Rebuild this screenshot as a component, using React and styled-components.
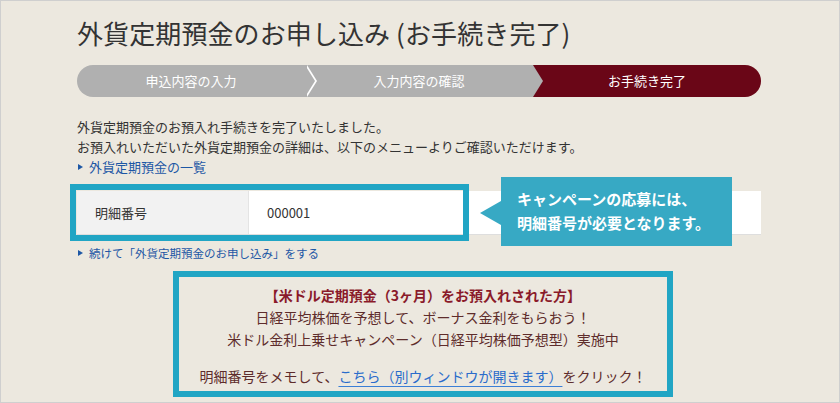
import React from "react";
import styled, { createGlobalStyle } from "styled-components";

const Global = createGlobalStyle`
  html, body { margin: 0; padding: 0; background: #ece8df; }
  body { font-family: "Noto Sans CJK JP", "Noto Sans", sans-serif; }
`;

const Page = styled.div`
  box-sizing: border-box;
  width: 840px;
  height: 403px;
  border: 1px solid #cfcfcf;
  background: #ece8df;
  padding: 15px 78px 0 76px;
  color: #333;
  overflow: hidden;
`;

const Title = styled.h1`
  margin: 0;
  font-size: 26px;
  font-weight: 400;
  line-height: 34px;
  color: #333;
  letter-spacing: 0.1px;
`;

const StepBar = styled.ol`
  display: flex;
  list-style: none;
  margin: 15px 0 0;
  padding: 0;
  height: 32px;
  border-radius: 16px;
  overflow: hidden;
`;

const Step = styled.li`
  position: relative;
  flex: 1;
  background: ${(p) => (p.$active ? "#6a0617" : "#b0b0b0")};
  color: #fff;
  font-size: 13px;
  line-height: 32px;
  text-align: center;

  ${(p) =>
    p.$arrow &&
    `
    &::after {
      content: "";
      position: absolute;
      top: 0;
      right: -10px;
      width: 0;
      height: 0;
      border-left: 10px solid ${p.$active ? "#6a0617" : "#b0b0b0"};
      border-top: 16px solid transparent;
      border-bottom: 16px solid transparent;
      z-index: 3;
    }
  `}

  ${(p) =>
    p.$divider &&
    `
    &::before {
      content: "";
      position: absolute;
      top: 0;
      right: -12px;
      width: 0;
      height: 0;
      border-left: 10px solid #fff;
      border-top: 16px solid transparent;
      border-bottom: 16px solid transparent;
      z-index: 2;
    }
  `}
`;

const Message = styled.div`
  margin-top: 20px;
  font-size: 13px;
  line-height: 20px;
  color: #333;
`;

const Line = styled.p`
  margin: 0;
`;

const ArrowLink = styled.a`
  display: flex;
  align-items: center;
  color: #1d57a5;
  font-size: ${(p) => p.$size || 13}px;
  line-height: 20px;
  text-decoration: none;
  cursor: pointer;

  &::before {
    content: "";
    width: 0;
    height: 0;
    margin-left: 1px;
    border-left: 5px solid #1d57a5;
    border-top: 3.5px solid transparent;
    border-bottom: 3.5px solid transparent;
    margin-right: 6px;
  }
`;

const InfoArea = styled.div`
  position: relative;
  margin-top: 14px;
`;

const InfoRow = styled.div`
  display: flex;
  height: 43px;
  background: #fff;
  border-bottom: 1px solid #dedede;
  font-size: 13px;
`;

const LabelCell = styled.div`
  display: flex;
  align-items: center;
  box-sizing: border-box;
  width: 172px;
  padding-left: 18px;
  background: #f2f2f2;
  border-right: 1px solid #e4e4e4;
  color: #333;
`;

const ValueCell = styled.div`
  display: flex;
  align-items: center;
  padding-left: 18px;
  color: #333;
`;

const Highlight = styled.div`
  position: absolute;
  left: -7px;
  top: -7px;
  box-sizing: border-box;
  width: 399px;
  height: 57px;
  border: 6px solid #21a5c4;
  pointer-events: none;
`;

const Callout = styled.div`
  position: absolute;
  left: 424px;
  top: -14px;
  box-sizing: border-box;
  width: 231px;
  height: 69px;
  padding: 10px 0 0 16px;
  background: #37a9c4;
  color: #fff;
  font-size: 15px;
  font-weight: 700;
  line-height: 24px;
  white-space: nowrap;

  &::before {
    content: "";
    position: absolute;
    left: -21px;
    top: 24px;
    width: 0;
    height: 0;
    border-right: 21px solid #37a9c4;
    border-top: 12px solid transparent;
    border-bottom: 12px solid transparent;
  }
`;

const ContinueWrap = styled.div`
  margin-top: 8px;
`;

const CampaignBox = styled.div`
  box-sizing: border-box;
  width: 500px;
  margin: 8px 0 0 96px;
  padding: 7px 0 4px;
  border: 6px solid #21a5c4;
  text-align: center;
  font-size: 14px;
  line-height: 22px;
  color: #5e2c2b;
`;

const CampaignHead = styled.p`
  margin: 0;
  font-weight: 700;
  color: #8a1a2a;
`;

const CampaignLine = styled.p`
  margin: ${(p) => (p.$gap ? "15px 0 0" : "0")};
`;

const InlineLink = styled.a`
  color: #2a6ccb;
  text-decoration: underline;
  text-decoration-color: #3b7fd6;
  text-underline-offset: 4px;
  cursor: pointer;
`;

const steps = ["申込内容の入力", "入力内容の確認", "お手続き完了"];

export default function App() {
  return (
    <>
      <Global />
      <Page>
        <Title>外貨定期預金のお申し込み (お手続き完了)</Title>
        <StepBar>
          {steps.map((s, i) => (
            <Step
              key={s}
              $active={i === steps.length - 1}
              $arrow={i < steps.length - 1}
              $divider={i === 0}
            >
              {s}
            </Step>
          ))}
        </StepBar>
        <Message>
          <Line>外貨定期預金のお預入れ手続きを完了いたしました。</Line>
          <Line>お預入れいただいた外貨定期預金の詳細は、以下のメニューよりご確認いただけます。</Line>
          <ArrowLink>外貨定期預金の一覧</ArrowLink>
        </Message>
        <InfoArea>
          <InfoRow>
            <LabelCell>明細番号</LabelCell>
            <ValueCell>000001</ValueCell>
          </InfoRow>
          <Highlight />
          <Callout>
            キャンペーンの応募には、
            <br />
            明細番号が必要となります。
          </Callout>
        </InfoArea>
        <ContinueWrap>
          <ArrowLink $size={11.5}>続けて「外貨定期預金のお申し込み」をする</ArrowLink>
        </ContinueWrap>
        <CampaignBox>
          <CampaignHead>【米ドル定期預金（3ヶ月）をお預入れされた方】</CampaignHead>
          <CampaignLine>日経平均株価を予想して、ボーナス金利をもらおう！</CampaignLine>
          <CampaignLine>米ドル金利上乗せキャンペーン（日経平均株価予想型）実施中</CampaignLine>
          <CampaignLine $gap>
            明細番号をメモして、<InlineLink>こちら（別ウィンドウが開きます）</InlineLink>をクリック！
          </CampaignLine>
        </CampaignBox>
      </Page>
    </>
  );
}
